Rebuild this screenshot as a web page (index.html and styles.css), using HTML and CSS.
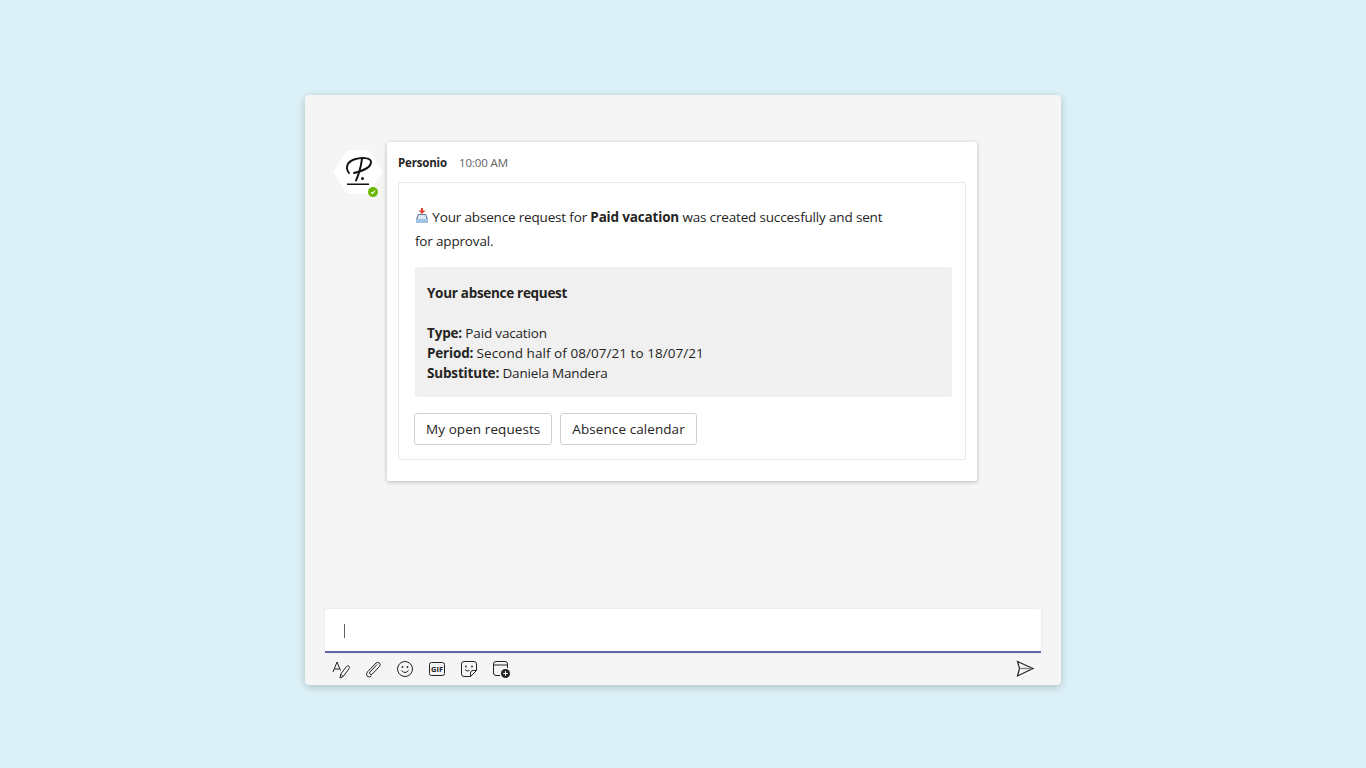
FILE: index.html
```html
<!DOCTYPE html>
<html lang="en">
<head>
<meta charset="UTF-8">
<meta name="viewport" content="width=device-width, initial-scale=1.0">
<title>Personio chat</title>
<link rel="stylesheet" href="styles.css">
</head>
<body>
<div class="window">
  <div class="thread">
    <div class="avatar">
      <svg class="avatar-hex" width="50" height="46" viewBox="0 0 50 46">
        <path d="M13 2.5Q14 1 16 1H34Q36 1 37 2.5L49 22Q49.6 23 49 24L37 43.5Q36 45 34 45H16Q14 45 13 43.500L1 24Q.4 23 1 22Z" fill="#fff"/>
        <path d="M16 24C12 19 14 13 21 10.500C27 8.500 38 8 38 13C38 18 30 22 21 24" fill="none" stroke="#111" stroke-width="1.900" stroke-linecap="round"/>
        <path d="M29 10C28 17 26 25 23 31.500" fill="none" stroke="#111" stroke-width="1.900" stroke-linecap="round"/>
        <circle cx="29.500" cy="29.500" r="1.500" fill="#111"/>
        <rect x="14" y="34.500" width="22" height="1.500" fill="#111"/>
      </svg>
      <span class="status">
        <svg width="6" height="6" viewBox="0 0 6 6"><path d="M1 3.200L2.500 4.500L5 1.600" fill="none" stroke="#fff" stroke-width="1.100"/></svg>
      </span>
    </div>
    <div class="bubble">
      <div class="meta">
        <span class="sender">Personio</span>
        <span class="time">10:00 AM</span>
      </div>
      <div class="card">
        <p class="intro">
          <svg class="inbox-icon" width="14" height="15" viewBox="0 0 14 15">
            <rect x="6" y="0" width="2" height="3" fill="#e0452f"/>
            <path d="M3.500 2.500H10.500L7 6Z" fill="#e0452f"/>
            <path d="M3 6H11L13 11V15H1V11Z" fill="#5f7f9c"/>
            <path d="M3.500 7H10.500L11.500 11H2.500Z" fill="#dfe8ef"/>
            <rect x="1" y="11" width="12" height="4" fill="#9fc3e0"/>
          </svg>
          Your absence request for <b>Paid vacation</b> was created succesfully and sent<br>for approval.
        </p>
        <div class="summary">
          <p class="summary-title">Your absence request</p>
          <p><b>Type:</b> Paid vacation</p>
          <p><b>Period:</b> <span class="period">Second half of 08/07/21 to 18/07/21</span></p>
          <p><b>Substitute:</b> Daniela Mandera</p>
        </div>
        <div class="actions">
          <button class="action">My open requests</button>
          <button class="action">Absence calendar</button>
        </div>
      </div>
    </div>
  </div>
  <div class="composer">
    <div class="input"><span class="caret"></span></div>
    <div class="toolbar">
      <div class="tools">
        <svg class="tool" width="20" height="20" viewBox="0 0 20 20" fill="none" stroke="#252423" stroke-width="1">
          <path d="M2 13L6 3L9.500 11.500M3.300 10H8.500"/>
          <path d="M9 19L9.800 15L15.500 7.500Q16.800 6.200 18 7.200Q19.200 8.400 18 9.800L12.200 17.500Z"/>
          <path d="M10 15.300L12 17.300"/>
        </svg>
        <svg class="tool" width="20" height="20" viewBox="0 0 20 20" fill="none" stroke="#252423" stroke-width="1">
          <path d="M14 5.500L7 13Q6 14.500 7 15.300Q8.200 16 9.300 15L16.500 7.500Q18 5.500 16.500 4Q15 2.800 13 4L4.500 12.800Q2.500 15.500 4.300 17.300Q6.200 18.800 8.500 17"/>
        </svg>
        <svg class="tool" width="20" height="20" viewBox="0 0 20 20" fill="none" stroke="#252423" stroke-width="1">
          <circle cx="10" cy="10" r="7.500"/>
          <path d="M6.500 11.500Q10 15.500 13.500 11.500"/>
          <circle cx="7.500" cy="8" r=".9" fill="#252423" stroke="none"/>
          <circle cx="12.500" cy="8" r=".9" fill="#252423" stroke="none"/>
        </svg>
        <svg class="tool" width="20" height="20" viewBox="0 0 20 20" fill="none" stroke="#252423" stroke-width="1">
          <rect x="2.500" y="3.500" width="15" height="13" rx="2"/>
          <text x="10" y="12.800" class="gif-label">GIF</text>
        </svg>
        <svg class="tool" width="20" height="20" viewBox="0 0 20 20" fill="none" stroke="#252423" stroke-width="1">
          <path d="M11.500 17.500H5Q2.500 17.500 2.500 15V5Q2.500 2.500 5 2.500H15Q17.500 2.500 17.500 5V11.500Z"/>
          <path d="M11.500 17.500V14Q11.500 11.500 14 11.500H17.500"/>
          <path d="M6 10.500Q8 13 10.500 11.500"/>
          <circle cx="7" cy="7.500" r=".9" fill="#252423" stroke="none"/>
          <circle cx="13" cy="7.500" r=".9" fill="#252423" stroke="none"/>
        </svg>
        <svg class="tool" width="20" height="20" viewBox="0 0 20 20" fill="none" stroke="#252423" stroke-width="1">
          <path d="M9 16.500H5Q2.500 16.500 2.500 14V5Q2.500 2.500 5 2.500H14Q16.500 2.500 16.500 5V9"/>
          <path d="M2.500 6H16.500"/>
          <circle cx="14.500" cy="14.500" r="4.500" fill="#252423" stroke="none"/>
          <path d="M14.500 12.200V16.800M12.200 14.500H16.800" stroke="#fff"/>
        </svg>
      </div>
      <svg class="send" width="20" height="20" viewBox="0 0 20 20" fill="none" stroke="#252423" stroke-width="1.200">
        <path d="M2.500 2.500L18 9.500L2.500 17L4.500 9.500Z"/>
        <path d="M4.500 9.500H17" stroke-width="1.500" stroke="#8a8886"/>
      </svg>
    </div>
  </div>
</div>
</body>
</html>
```
FILE: styles.css
```css
body {
  margin: 0;
  height: 768px;
  overflow: hidden;
  background: #dbf0f7;
  font-family: 'Open Sans', 'Noto Sans', sans-serif;
  font-size: 13.500px;
  letter-spacing: -0.170px;
  color: #252423;
}
p {
  margin: 0;
}
.window {
  box-sizing: border-box;
  width: 756px;
  height: 590px;
  margin: 95px auto 0;
  padding: 47px 20px 0;
  display: flex;
  flex-direction: column;
  justify-content: space-between;
  background: #f5f5f5;
  border-radius: 4px;
  box-shadow: 0 2px 8px rgba(0, 0, 0, 0.2);
}
.thread {
  display: flex;
  align-items: flex-start;
  padding-left: 9px;
}
.avatar {
  position: relative;
  width: 50px;
  height: 46px;
  margin-top: 7px;
  margin-left: -1px;
  margin-right: 4px;
  flex-shrink: 0;
}
.avatar-hex {
  display: block;
}
.status {
  position: absolute;
  right: 4px;
  bottom: -3px;
  width: 10px;
  height: 10px;
  display: flex;
  align-items: center;
  justify-content: center;
  background: #6bb700;
  border: 1px solid #fff;
  border-radius: 50%;
}
.bubble {
  box-sizing: border-box;
  width: 590px;
  height: 339px;
  padding: 12px 11px 21px;
  background: #fff;
  border-radius: 2px;
  box-shadow: 0 1px 4px rgba(0, 0, 0, 0.25);
}
.meta {
  display: flex;
  align-items: baseline;
  gap: 12px;
  height: 18px;
  margin-bottom: 10px;
  line-height: 18px;
}
.sender {
  font-size: 11.500px;
  font-weight: 700;
}
.time {
  font-size: 11.500px;
  letter-spacing: -0.100px;
  color: #616161;
}
.card {
  box-sizing: border-box;
  height: 278px;
  padding: 22px 13px 0 16px;
  border: 1px solid #e8e8e8;
  border-radius: 2px;
}
.intro {
  line-height: 24px;
}
.inbox-icon {
  vertical-align: -1px;
}
.summary {
  margin-top: 14px;
  height: 130px;
  box-sizing: border-box;
  padding: 16px 12px 0;
  background: #f0f0f0;
  border-radius: 2px;
  line-height: 20px;
}
.summary-title {
  font-weight: 700;
  letter-spacing: -0.300px;
  margin-bottom: 20px;
}
.period {
  letter-spacing: 0.050px;
}
.actions {
  display: flex;
  gap: 8px;
  margin-top: 16px;
  margin-left: -1px;
}
.action {
  box-sizing: border-box;
  height: 32px;
  padding: 0 11px;
  font-family: inherit;
  font-size: 13.500px;
  letter-spacing: 0.080px;
  font-weight: 500;
  color: #252423;
  background: #fff;
  border: 1px solid #d1d1d1;
  border-radius: 3px;
}
.input {
  box-sizing: border-box;
  height: 44px;
  margin-top: 1px;
  padding: 15px 19px;
  background: #fff;
  border-bottom: 2px solid #6264a7;
  border-radius: 3px 3px 0 0;
  box-shadow: 0 0 3px rgba(0, 0, 0, 0.08);
}
.caret {
  display: block;
  width: 1px;
  height: 14px;
  background: #605e5c;
}
.toolbar {
  display: flex;
  align-items: center;
  justify-content: space-between;
  height: 32px;
  padding: 0 6px;
}
.tools {
  display: flex;
  gap: 12px;
}
.tool, .send {
  display: block;
}
.gif-label {
  font-family: 'Open Sans', sans-serif;
  font-size: 7.500px;
  font-weight: 700;
  letter-spacing: 0;
  text-anchor: middle;
  fill: #252423;
  stroke: none;
}
```
